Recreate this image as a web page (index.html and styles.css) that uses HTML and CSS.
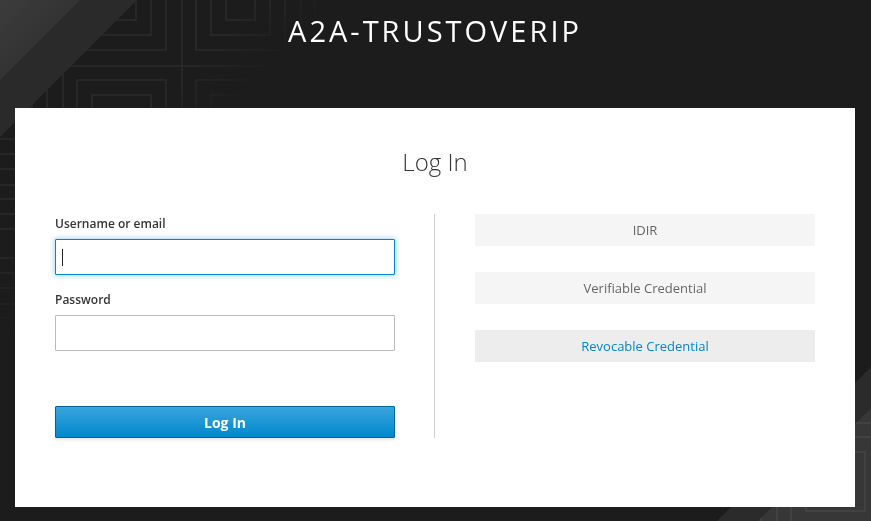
FILE: index.html
```html
<!DOCTYPE html>
<html lang="en">
<head>
<meta charset="utf-8">
<title>Log in to A2A-TRUSTOVERIP</title>
<link rel="stylesheet" href="styles.css">
</head>
<body>
<div class="bg" aria-hidden="true">
  <svg class="bg-art" width="871" height="521" viewBox="0 0 871 521">
    <defs>
      <pattern id="maze" x="62" y="65" width="119" height="119" patternUnits="userSpaceOnUse">
        <g fill="none" stroke="#2a2a2a" stroke-width="1.6">
          <path d="M1 0V119M0 1H119"/>
          <rect x="15" y="15" width="89" height="89"/>
          <rect x="30" y="30" width="59" height="59"/>
          <rect x="45" y="45" width="29" height="29"/>
        </g>
      </pattern>
      <pattern id="maze2" x="62" y="65" width="119" height="119" patternUnits="userSpaceOnUse">
        <g fill="none" stroke="#444" stroke-width="1.6">
          <path d="M1 0V119M0 1H119"/>
          <rect x="15" y="15" width="89" height="89"/>
          <rect x="30" y="30" width="59" height="59"/>
          <rect x="45" y="45" width="29" height="29"/>
        </g>
      </pattern>
      <linearGradient id="fade" gradientUnits="userSpaceOnUse" x1="0" y1="0" x2="400" y2="400">
        <stop offset="0.32" stop-color="#fff"/>
        <stop offset="0.43" stop-color="#000"/>
      </linearGradient>
      <linearGradient id="light" gradientUnits="userSpaceOnUse" x1="0" y1="0" x2="40" y2="40">
        <stop offset="0" stop-color="#3c3c3c"/>
        <stop offset="1" stop-color="#333"/>
      </linearGradient>
      <mask id="fadeMask">
        <rect width="871" height="521" fill="url(#fade)"/>
      </mask>
    </defs>
    <rect width="871" height="521" fill="url(#maze)" mask="url(#fadeMask)"/>
    <polygon points="0,0 137,0 0,137" fill="#2a2a2a"/>
    <polygon points="0,0 80,0 0,80" fill="url(#light)"/>
    <polygon points="717,521 871,367 871,521" fill="#2b2b2b"/>
    <polygon points="758,521 871,408 871,521" fill="#373737"/>
    <polygon points="758,521 871,408 871,521" fill="url(#maze2)"/>
  </svg>
</div>

<div class="page">
  <header class="header">A2A-TRUSTOVERIP</header>
  <main class="card">
    <h1 class="page-title">Log In</h1>
    <div class="content">
      <form class="form" onsubmit="return false">
        <div class="group">
          <label class="label" for="username">Username or email</label>
          <div class="field">
            <input class="input input-focus" id="username" type="text">
            <span class="caret"></span>
          </div>
        </div>
        <div class="group">
          <label class="label" for="password">Password</label>
          <input class="input" id="password" type="password">
        </div>
        <button class="btn-primary" type="submit">Log In</button>
      </form>
      <div class="divider"></div>
      <div class="providers">
        <a class="provider" href="#">IDIR</a>
        <a class="provider" href="#">Verifiable Credential</a>
        <a class="provider provider-hover" href="#">Revocable Credential</a>
      </div>
    </div>
  </main>
</div>
</body>
</html>
```

FILE: styles.css
```css
html, body {
  margin: 0;
  padding: 0;
  height: 100%;
}

body {
  background: #1c1c1c;
  font-family: "Open Sans", "DejaVu Sans", sans-serif;
  color: #363636;
  overflow: hidden;
}

.bg {
  position: fixed;
  inset: 0;
  z-index: 0;
}

.bg-art {
  display: block;
}

.page {
  position: relative;
  z-index: 1;
  padding-right: 1px;
}

.header {
  padding-top: 13px;
  height: 35px;
  margin-bottom: 60px;
  font-size: 29px;
  line-height: 35px;
  letter-spacing: 3px;
  text-align: center;
  color: #fff;
}

.card {
  box-sizing: border-box;
  width: 840px;
  margin: 0 auto;
  background: #fff;
  padding: 39px 40px 69px;
}

.page-title {
  margin: 0;
  font-size: 24px;
  font-weight: 300;
  line-height: 29px;
  text-align: center;
  color: #363636;
}

.content {
  margin-top: 38px;
  display: grid;
  grid-template-columns: 340px 1fr 340px;
}

.form {
  display: flex;
  flex-direction: column;
}

.group {
  display: flex;
  flex-direction: column;
  margin-bottom: 15px;
}

.label {
  display: block;
  font-size: 12px;
  font-weight: 600;
  line-height: 20px;
  margin-bottom: 5px;
  color: #363636;
}

.field {
  position: relative;
}

.input {
  box-sizing: border-box;
  display: block;
  width: 100%;
  height: 36px;
  margin: 0;
  padding: 2px 6px;
  border: 1px solid #bbb;
  border-radius: 1px;
  background: #fff;
  font-family: inherit;
  font-size: 14px;
  outline: none;
}

.input-focus {
  border-color: #0088ce;
  box-shadow: 0 0 5px 1px rgba(0, 136, 206, 0.35);
}

.caret {
  position: absolute;
  left: 7px;
  top: 10px;
  width: 1px;
  height: 17px;
  background: #222;
}

.btn-primary {
  margin-top: 40px;
  height: 32px;
  padding: 0;
  border: 1px solid #00659c;
  border-radius: 1px;
  background: linear-gradient(to bottom, #39a5dc 0%, #0088ce 100%);
  color: #fff;
  font-family: inherit;
  font-size: 14px;
  font-weight: 700;
  box-shadow: 0 2px 3px rgba(3, 3, 3, 0.1);
  cursor: pointer;
}

.divider {
  width: 1px;
  justify-self: start;
  margin-left: 39px;
  background: #d1d1d1;
}

.providers {
  display: flex;
  flex-direction: column;
  gap: 26px;
}

.provider {
  display: block;
  height: 32px;
  line-height: 33px;
  background: #f5f5f5;
  text-align: center;
  text-decoration: none;
  font-size: 13px;
  color: #666;
}

.provider-hover {
  background: #ededed;
  color: #0088ce;
}
```
